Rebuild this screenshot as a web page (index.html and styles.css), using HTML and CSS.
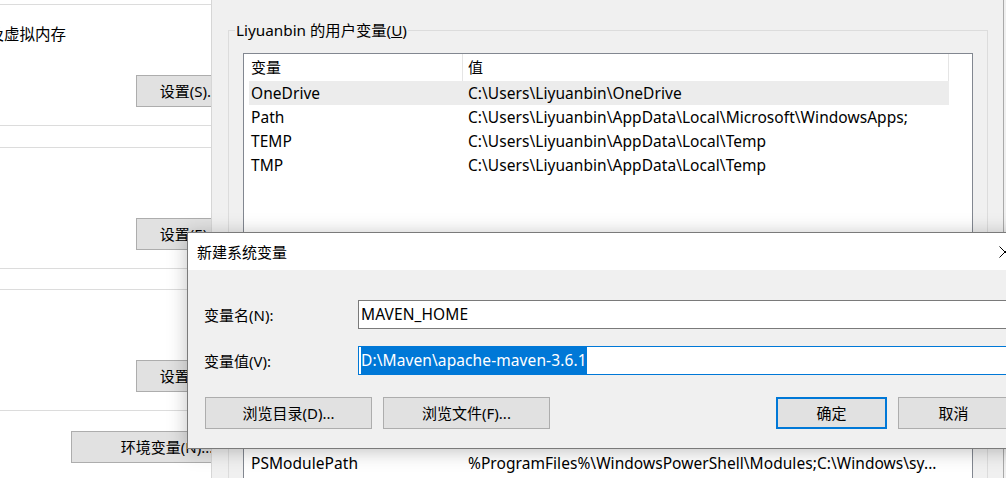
FILE: index.html
```html
<!DOCTYPE html>
<html lang="zh-CN">
<head>
<meta charset="utf-8">
<title>新建系统变量</title>
<link rel="stylesheet" href="styles.css">
</head>
<body>
<div class="screen">
  <section class="sysprops">
    <div class="sp-group sp-perf">
      <p class="sp-text">以及虚拟内存</p>
      <button class="btn sp-btn sp-btn-first">设置(S)...</button>
    </div>
    <div class="sp-group sp-profile">
      <button class="btn sp-btn">设置(E)...</button>
    </div>
    <div class="sp-group sp-startup">
      <button class="btn sp-btn">设置(T)...</button>
    </div>
    <button class="btn sp-env">环境变量(N)...</button>
  </section>

  <section class="envwin">
    <fieldset class="group group-user">
      <legend>Liyuanbin 的用户变量(<u>U</u>)</legend>
      <div class="list list-user">
        <div class="list-head"><span>变量</span><span>值</span></div>
        <div class="rows">
          <div class="row selected"><span>OneDrive</span><span>C:\Users\Liyuanbin\OneDrive</span></div>
          <div class="row"><span>Path</span><span>C:\Users\Liyuanbin\AppData\Local\Microsoft\WindowsApps;</span></div>
          <div class="row"><span>TEMP</span><span>C:\Users\Liyuanbin\AppData\Local\Temp</span></div>
          <div class="row"><span>TMP</span><span>C:\Users\Liyuanbin\AppData\Local\Temp</span></div>
        </div>
      </div>
      <div class="group-actions">
        <button class="btn btn-std">新建(N)...</button>
        <button class="btn btn-std">编辑(E)...</button>
        <button class="btn btn-std">删除(D)</button>
      </div>
    </fieldset>

    <fieldset class="group group-sys">
      <legend>系统变量(<u>S</u>)</legend>
      <div class="list list-sys">
        <div class="list-head"><span>变量</span><span>值</span></div>
        <div class="rows">
          <div class="row"><span>PROCESSOR_IDENTIFIER</span><span>Intel64 Family 6 Model 142 Stepping 10, GenuineIntel</span></div>
          <div class="row"><span>PROCESSOR_LEVEL</span><span>6</span></div>
          <div class="row"><span>PROCESSOR_REVISION</span><span>8e0a</span></div>
          <div class="row"><span>PSModulePath</span><span>%ProgramFiles%\WindowsPowerShell\Modules;C:\Windows\sy...</span></div>
          <div class="row"><span>TEMP</span><span>C:\Windows\TEMP</span></div>
        </div>
      </div>
    </fieldset>
  </section>

  <div class="dialog">
    <div class="dlg-title">
      <span>新建系统变量</span>
      <span class="dlg-close">
        <svg width="12" height="12" viewBox="0 0 12 12" aria-hidden="true"><path d="M0.5 0.5L11.5 11.5M11.5 0.5L0.5 11.5" stroke="#000" stroke-width="1" fill="none"/></svg>
      </span>
    </div>
    <div class="dlg-body">
      <div class="field-row">
        <span class="field-label">变量名(N):</span>
        <div class="field">MAVEN_HOME</div>
      </div>
      <div class="field-row field-row-2">
        <span class="field-label">变量值(V):</span>
        <div class="field focus"><span class="sel">D:\Maven\apache-maven-3.6.1</span></div>
      </div>
      <div class="dlg-actions">
        <div class="btn-group btn-group-left">
          <button class="btn btn-wide">浏览目录(D)...</button>
          <button class="btn btn-wide">浏览文件(F)...</button>
        </div>
        <div class="btn-group">
          <button class="btn btn-std btn-default">确定</button>
          <button class="btn btn-std">取消</button>
        </div>
      </div>
    </div>
  </div>
</div>
</body>
</html>
```

FILE: styles.css
```css
* { box-sizing: border-box; }

html, body { margin: 0; padding: 0; }

body {
  width: 1006px;
  height: 478px;
  overflow: hidden;
  background: #efefef;
  font-family: "Noto Sans", "Noto Sans CJK SC", sans-serif;
  font-size: 15px;
  color: #000;
}

.screen {
  position: relative;
  display: flex;
  height: 478px;
}

/* ---------- background window: System Properties ---------- */
.sysprops {
  width: 211px;
  flex: none;
  background: #fff;
  overflow: hidden;
  padding-top: 4px;
}

.sp-group {
  height: 122px;
  border-top: 1px solid #dcdcdc;
  border-bottom: 1px solid #dcdcdc;
}

.sp-profile { margin-top: 21px; }
.sp-startup { margin-top: 20px; }

.sp-text {
  margin: 19px 0 0 -27px;
  line-height: 20px;
  font-size: 15.5px;
  white-space: nowrap;
}

.btn {
  display: block;
  font: inherit;
  color: #000;
  height: 32px;
  padding: 0;
  line-height: 20px;
  background: #e1e1e1;
  border: 1px solid #adadad;
  white-space: nowrap;
}

.sp-btn {
  width: 111px;
  margin: 70px 0 0 136px;
  text-indent: -4px;
}

.sp-btn-first { margin-top: 31px; }

.sp-env {
  width: 192px;
  margin: 20px 0 0 71px;
}

/* ---------- Environment variables window ---------- */
.envwin {
  width: 793px;
  flex: none;
  background: #f0f0f0;
  border-left: 1px solid #d6d6d6;
  border-right: 1px solid #a9a9a9;
  padding: 20px 15px 0 16px;
}

.group {
  margin: 0;
  min-width: 0;
  border: 1px solid #dcdcdc;
  padding: 12px 14px 10px;
}

.group legend {
  padding: 0 1px;
  margin-left: -8px;
  line-height: 21px;
  font-size: 15.3px;
}

.group-sys { margin-top: 10px; }

.list {
  background: #fff;
  border: 1px solid #828790;
  overflow: hidden;
}

.list-user { height: 200px; }
.list-sys { height: 200px; }

.list-head {
  display: grid;
  grid-template-columns: 219px 486px;
  height: 27px;
  line-height: 27px;
}

.list-head span {
  border-right: 1px solid #e5e5e5;
  padding-left: 7px;
}

.list-head span + span { padding-left: 5px; }

.rows { padding-left: 5px; }

.row {
  display: grid;
  grid-template-columns: 213px 487px;
  width: 700px;
  height: 24px;
  line-height: 24px;
  font-size: 15.5px;
  letter-spacing: 0.05px;
  white-space: nowrap;
}

.row span { overflow: hidden; padding-left: 2px; }
.row span + span { padding-left: 6px; }

.row.selected { background: #ececec; }

.group-actions {
  display: flex;
  justify-content: flex-end;
  gap: 11px;
  margin-top: 12px;
}

.btn-std { width: 111px; }
.btn-wide { width: 167px; }

/* ---------- New system variable dialog ---------- */
.dialog {
  position: absolute;
  left: 187px;
  top: 232px;
  width: 842px;
  height: 217px;
  display: flex;
  flex-direction: column;
  background: #f0f0f0;
  border: 1px solid #7a7a7a;
  box-shadow: 0 2px 18px rgba(0, 0, 0, 0.25);
}

.dlg-title {
  height: 37px;
  flex: none;
  background: #fff;
  display: flex;
  align-items: center;
  justify-content: space-between;
  padding-left: 9px;
}

.dlg-close {
  width: 46px;
  height: 37px;
  display: flex;
  align-items: center;
  justify-content: center;
}

.dlg-body {
  flex: 1;
  padding: 30px 19px 0 16px;
}

.field-row {
  display: flex;
  align-items: center;
  height: 29px;
}

.field-row-2 { margin-top: 17px; }

.field-label { width: 154px; flex: none; }

.field {
  width: 651px;
  height: 29px;
  background: #fff;
  border: 1px solid #7a7a7a;
  padding: 0 2px;
  line-height: 27px;
  font-size: 15.5px;
  letter-spacing: 0.1px;
  white-space: nowrap;
  overflow: hidden;
}

.field.focus { border-color: #0078d7; }

.sel {
  display: inline-block;
  background: #0078d7;
  color: #fff;
}

.dlg-actions {
  display: flex;
  justify-content: space-between;
  margin-top: 22px;
}

.btn-group {
  display: flex;
  gap: 11px;
}

.btn-group-left { margin-left: 1px; }

.btn-default { border: 2px solid #0078d7; }
```
